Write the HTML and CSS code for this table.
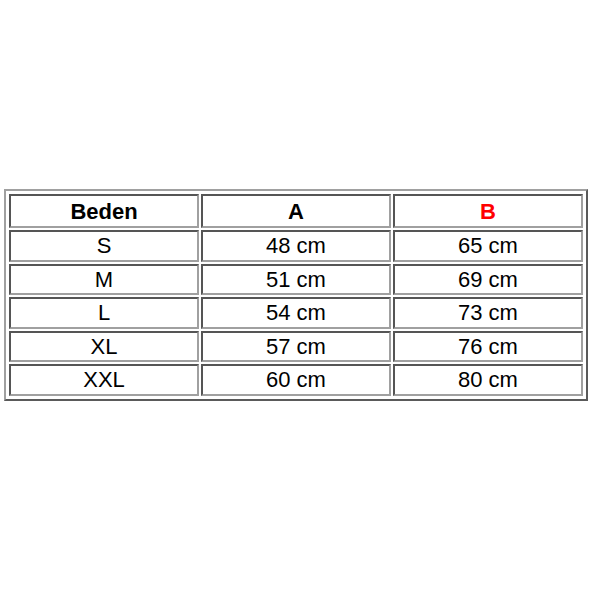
FILE: index.html
```html
<!DOCTYPE html>
<html>
<head>
<meta charset="utf-8">
<link rel="stylesheet" href="styles.css">
</head>
<body>
<div class="wrap">
<table class="size-table">
  <tr class="head"><th>Beden</th><th>A</th><th class="red">B</th></tr>
  <tr><td>S</td><td>48 cm</td><td>65 cm</td></tr>
  <tr><td>M</td><td>51 cm</td><td>69 cm</td></tr>
  <tr><td>L</td><td>54 cm</td><td>73 cm</td></tr>
  <tr><td>XL</td><td>57 cm</td><td>76 cm</td></tr>
  <tr><td>XXL</td><td>60 cm</td><td>80 cm</td></tr>
</table>
</div>
</body>
</html>
```

FILE: styles.css
```css
html, body {
  margin: 0;
  padding: 0;
  background: #ffffff;
}
.wrap {
  padding: 189px 0 0 4px;
}
.size-table {
  width: 584px;
  border: 2px solid;
  border-color: #a0a0a0 #5a5a5a #5a5a5a #a0a0a0;
  border-spacing: 2px;
  padding: 1px;
  font-family: "Liberation Sans", Arial, sans-serif;
  font-size: 22px;
  color: #000;
  table-layout: fixed;
}
.size-table th,
.size-table td {
  border: 2px solid;
  border-color: #555 #a0a0a0 #a0a0a0 #555;
  text-align: center;
  padding: 0;
  height: 27.5px;
  line-height: 27px;
}
.size-table th {
  font-weight: bold;
  height: 30px;
}
.size-table .red {
  color: #ff0000;
}
```
